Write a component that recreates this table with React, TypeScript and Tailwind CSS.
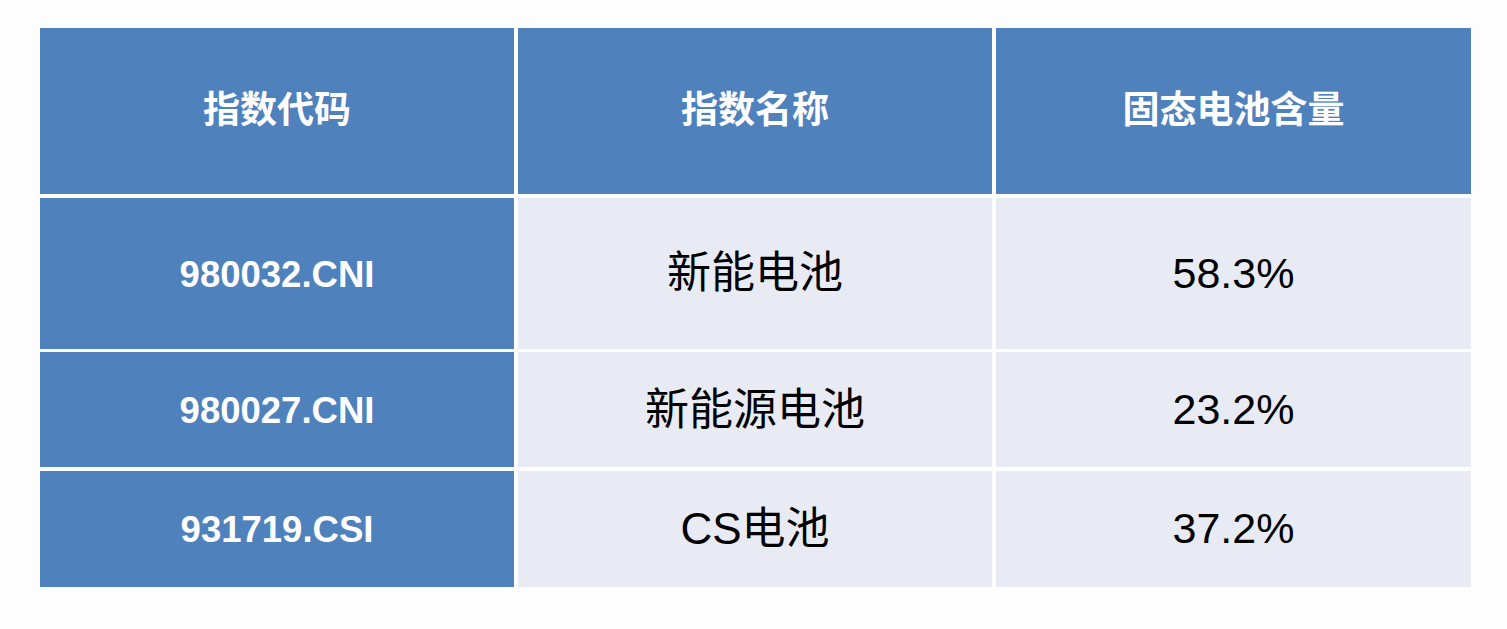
import { Fragment } from "react";

const rows = [
  { code: "980032.CNI", name: "新能电池", pct: "58.3%", h: "h-[151px]" },
  { code: "980027.CNI", name: "新能源电池", pct: "23.2%", h: "h-[115px]" },
  { code: "931719.CSI", name: "CS电池", pct: "37.2%", h: "h-[116px]" },
];

const font = "font-['Liberation_Sans','Noto_Sans_CJK_SC',sans-serif]";

export default function App() {
  return (
    <div className={`w-[1507px] h-[629px] bg-[#fdfdfe] pt-[28px] pl-[40px] ${font}`}>
      <div className="grid grid-cols-[474px_474px_475px] gap-x-[4px] gap-y-[3.5px] w-[1431px]">
        {["指数代码", "指数名称", "固态电池含量"].map((t) => (
          <div key={t} className="h-[166px] bg-[#4f81bd] flex items-center justify-center text-white text-[37px] font-bold">
            {t}
          </div>
        ))}
        {rows.map((r) => (
          <Fragment key={r.code}>
            <div className={`${r.h} bg-[#4f81bd] flex items-center justify-center pt-[4px] text-white text-[36.5px] font-bold`}>
              {r.code}
            </div>
            <div className={`${r.h} bg-[#e8ebf4] flex items-center justify-center text-black text-[44px]`}>
              {r.name}
            </div>
            <div className={`${r.h} bg-[#e8ebf4] flex items-center justify-center text-black text-[43px]`}>
              {r.pct}
            </div>
          </Fragment>
        ))}
      </div>
    </div>
  );
}
